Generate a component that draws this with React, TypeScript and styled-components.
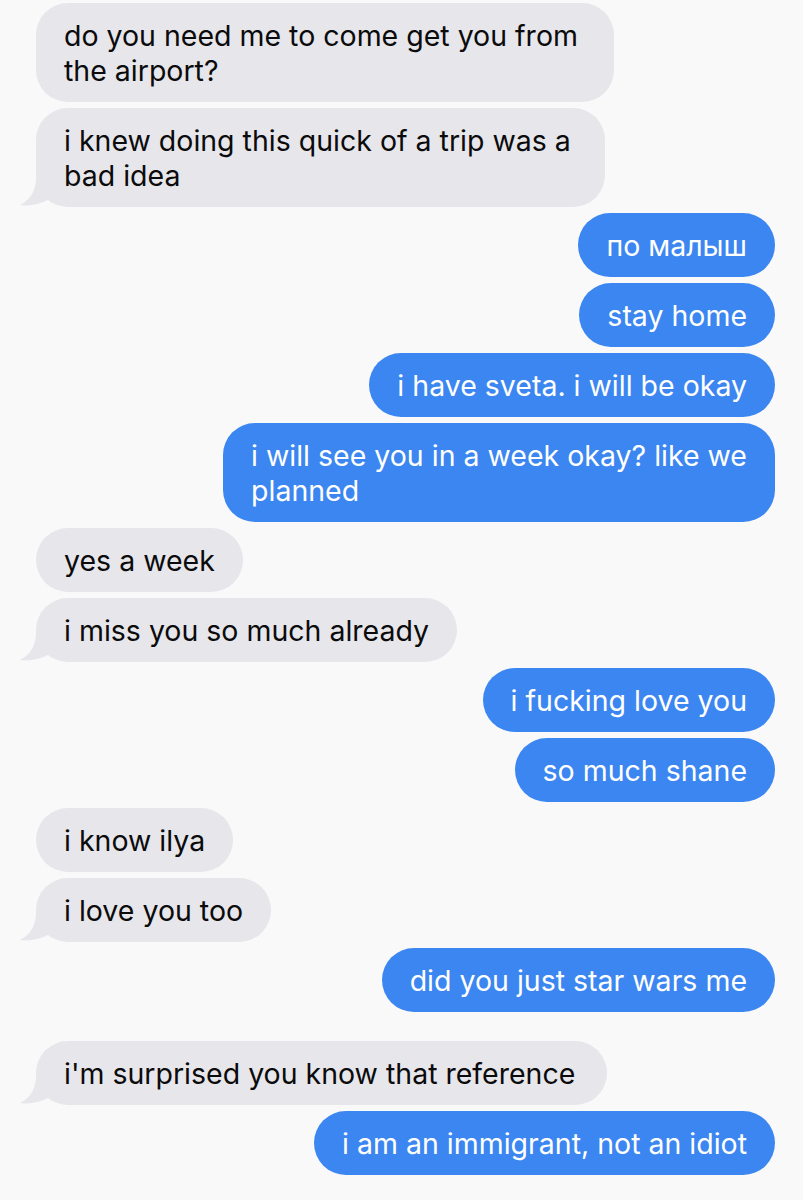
import * as React from 'react'
import styled, {createGlobalStyle} from 'styled-components'

type Sender = 'me' | 'them'

type Msg = {
    from: Sender
    lines: string[]
    tail?: boolean
    spaced?: boolean
    slack?: number
}

const messages: Msg[] = [
    {from: 'them', lines: ['do you need me to come get you from', 'the airport?'], slack: 8},
    {from: 'them', lines: ['i knew doing this quick of a trip was a', 'bad idea'], tail: true, slack: 6},
    {from: 'me', lines: ['по малыш']},
    {from: 'me', lines: ['stay home']},
    {from: 'me', lines: ['i have sveta. i will be okay']},
    {from: 'me', lines: ['i will see you in a week okay? like we', 'planned']},
    {from: 'them', lines: ['yes a week']},
    {from: 'them', lines: ['i miss you so much already'], tail: true},
    {from: 'me', lines: ['i fucking love you']},
    {from: 'me', lines: ['so much shane']},
    {from: 'them', lines: ['i know ilya']},
    {from: 'them', lines: ['i love you too'], tail: true},
    {from: 'me', lines: ['did you just star wars me']},
    {from: 'them', lines: ["i'm surprised you know that reference"], tail: true, spaced: true, slack: 4},
    {from: 'me', lines: ['i am an immigrant, not an idiot']},
]

const GlobalStyle = createGlobalStyle`
  html, body {
    margin: 0;
    padding: 0;
    background: #f9f9f9;
  }
`

const Thread = styled.div`
  display: flex;
  flex-direction: column;
  gap: 6px;
  padding: 3px 28px 24px 36px;
  min-height: 1200px;
  box-sizing: border-box;
  background: #f9f9f9;
  font-family: Inter, "Noto Sans", "DejaVu Sans", sans-serif;
`

type BubbleProps = {
    $from: Sender
    $spaced?: boolean
    $slack?: number
}

const Bubble = styled.div<BubbleProps>`
  position: relative;
  align-self: ${({$from}) => ($from === 'me' ? 'flex-end' : 'flex-start')};
  margin-top: ${({$spaced}) => ($spaced ? '23px' : '0')};
  padding: 15px ${({$slack}) => 28 + ($slack || 0)}px 14px 28px;
  border-radius: 32px;
  background: ${({$from}) => ($from === 'me' ? '#3b86f1' : '#e6e6eb')};
  color: ${({$from}) => ($from === 'me' ? '#ffffff' : '#0b0b0b')};
  font-size: 28.5px;
  line-height: 35px;
  white-space: nowrap;
`

const Tail = styled.svg`
  position: absolute;
  left: -18px;
  bottom: 0;
  width: 34px;
  height: 30px;
  overflow: visible;
`

const Line = styled.div``

const BubbleTail = () => (
    <Tail viewBox="0 0 34 30">
        <path d="M18,0 C18,12 14,22 2,28 C12,29.5 22,27 32,22 L34,0 Z" fill="#e6e6eb" />
    </Tail>
)

const App: React.FC = () => {
    return (
        <>
            <GlobalStyle />
            <Thread>
                {messages.map((m, i) => (
                    <Bubble key={i} $from={m.from} $spaced={m.spaced} $slack={m.slack}>
                        {m.tail && <BubbleTail />}
                        {m.lines.map((l, j) => (
                            <Line key={j}>{l}</Line>
                        ))}
                    </Bubble>
                ))}
            </Thread>
        </>
    )
}

export default App
